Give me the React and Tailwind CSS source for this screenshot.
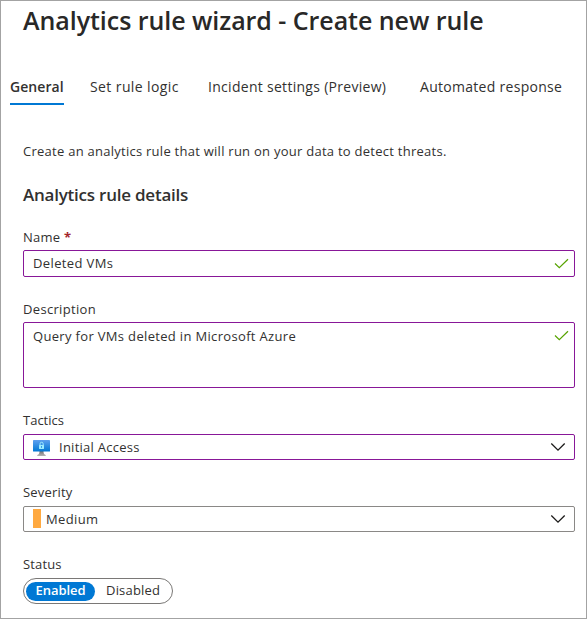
import React from 'react';

const tabs = [
  { label: 'General', cls: 'ml-[9px] w-[54px] font-semibold tracking-[0.05px] border-[#0078d4]' },
  { label: 'Set rule logic', cls: 'ml-[26px] w-[92px] tracking-[0.4px] border-transparent' },
  { label: 'Incident settings (Preview)', cls: 'ml-[26px] w-[182px] tracking-[0.29px] border-transparent' },
  { label: 'Automated response', cls: 'ml-[30px] w-[146px] tracking-[0.29px] border-transparent' },
];

function Check() {
  return (
    <svg className="mt-[7px] mr-[5px] h-3 w-4 shrink-0" viewBox="0 0 16 12" fill="none" stroke="#57a300" strokeWidth="1.2">
      <path d="M2 5.500 L6.300 9.600 L15 1.200" />
    </svg>
  );
}

function Chevron() {
  return (
    <svg className="mr-2 h-[10px] w-4 shrink-0" viewBox="0 0 16 10" fill="none" stroke="#1b1a19" strokeWidth="1.3">
      <path d="M1.3 1.5 L8 8.2 L14.7 1.5" />
    </svg>
  );
}

function Monitor() {
  return (
    <svg className="mt-0.5 mr-[9px] h-4 w-[17px] shrink-0" viewBox="0 0 17 16">
      <defs>
        <linearGradient id="screen" x1="0" y1="0" x2="0" y2="1">
          <stop offset="0" stopColor="#5ea0ef" />
          <stop offset="1" stopColor="#0078d4" />
        </linearGradient>
        <linearGradient id="stand" x1="0" y1="0" x2="0" y2="1">
          <stop offset="0" stopColor="#707070" />
          <stop offset="1" stopColor="#b3b3b3" />
        </linearGradient>
      </defs>
      <path d="M6.5 11h4c0 2.4.5 3.4 2.2 3.900v1H4.300v-1C6 14.400 6.500 13.400 6.500 11z" fill="url(#stand)" />
      <rect width="17" height="11.500" rx=".6" fill="url(#screen)" />
      <path d="M7 5V3.900a1.600 1.600 0 0 1 3.200 0V5" fill="none" stroke="#9cebff" strokeWidth="1" />
      <rect x="6" y="4.900" width="5" height="4" rx=".4" fill="#9cebff" />
      <rect x="8" y="6.200" width="1" height="1.500" fill="#1b88dc" />
    </svg>
  );
}

export default function App() {
  return (
    <main className="flex h-[619px] w-[587px] flex-col overflow-hidden border border-[#a3a3a3] bg-white font-['Open_Sans','Noto_Sans',sans-serif] text-[13px] leading-5 tracking-[0.26px] whitespace-nowrap text-[#323130]">
      <h1 className="mt-[3px] ml-[22px] h-8 text-[25px] leading-8 font-semibold tracking-[-0.05px] text-[#292827]">Analytics rule wizard - Create new rule</h1>
      <nav className="mt-[41px] flex text-[14px]">
        {tabs.map((t) => (
          <button key={t.label} className={`h-7 border-b-2 pb-[6px] text-left ${t.cls}`}>{t.label}</button>
        ))}
      </nav>
      <section className="mt-9 mr-[11px] ml-[22px] flex flex-col">
        <p className="h-5">Create an analytics rule that will run on your data to detect threats.</p>
        <h2 className="mt-[22px] h-6 text-[17px] leading-6 font-semibold tracking-[-0.23px]">Analytics rule details</h2>

        <label className="mt-5 h-5">Name <span className="font-bold text-[#a4262c]">*</span></label>
        <div className="mt-[3px] flex h-[27px] justify-between rounded-xs border border-[#881798] pl-[9px]">
          <span className="mt-[2px] tracking-[0.38px]">Deleted VMs</span>
          <Check />
        </div>

        <label className="mt-[22px] h-5 tracking-[0.33px]">Description</label>
        <div className="mt-[3px] flex h-[66px] justify-between rounded-xs border border-[#881798] pl-[9px]">
          <span className="mt-[3px] tracking-[0.33px]">Query for VMs deleted in Microsoft Azure</span>
          <Check />
        </div>

        <label className="mt-[22px] h-5 tracking-[0px]">Tactics</label>
        <div className="mt-1 flex h-[26px] items-center rounded-xs border border-[#881798] pl-[9px]">
          <Monitor />
          <span className="flex-1">Initial Access</span>
          <Chevron />
        </div>

        <label className="mt-[22px] h-5 tracking-[0.2px]">Severity</label>
        <div className="mt-1 flex h-[26px] items-center rounded-xs border border-[#8a8886] pl-[9px]">
          <span className="mr-[5px] mb-px h-[19px] w-2 bg-[#ffa940]" />
          <span className="flex-1 tracking-[0.38px]">Medium</span>
          <Chevron />
        </div>

        <label className="mt-[22px] h-5 tracking-[0.15px]">Status</label>
        <div className="mt-1 flex h-[26px] w-[150px] items-center rounded-full border border-[#7a7876] pl-0.5">
          <span className="flex h-[19px] w-[69px] items-center justify-center rounded-full bg-[#0078d4] pb-0.5 font-semibold tracking-[-0.05px] text-white">Enabled</span>
          <span className="mb-0.5 ml-[11px] tracking-[0.2px]">Disabled</span>
        </div>
      </section>
    </main>
  );
}
